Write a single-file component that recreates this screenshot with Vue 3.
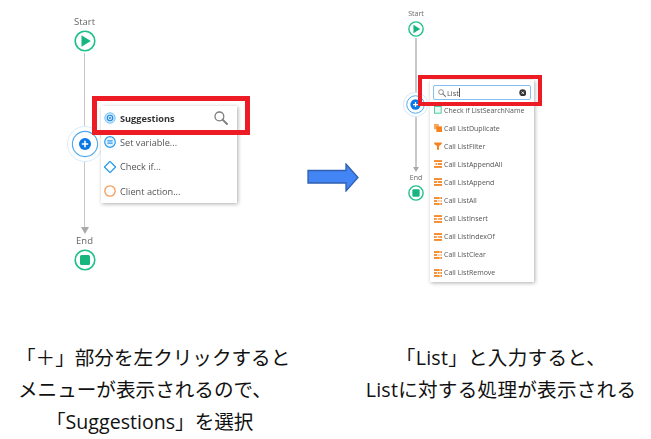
<script setup>
const leftRows = [
  { label: 'Suggestions', icon: 'target', bold: true },
  { label: 'Set variable...', icon: 'assign' },
  { label: 'Check if...', icon: 'diamond' },
  { label: 'Client action...', icon: 'action' },
]
const rightRows = [
  { label: 'Check if ListSearchName', icon: 'check' },
  { label: 'Call ListDuplicate', icon: 'dup' },
  { label: 'Call ListFilter', icon: 'filter' },
  { label: 'Call ListAppendAll', icon: 'appendall' },
  { label: 'Call ListAppend', icon: 'append' },
  { label: 'Call ListAll', icon: 'all' },
  { label: 'Call ListInsert', icon: 'insert' },
  { label: 'Call ListIndexOf', icon: 'insert' },
  { label: 'Call ListClear', icon: 'all' },
  { label: 'Call ListRemove', icon: 'remove' },
]
</script>

<template>
  <div class="page">
    <div class="diagrams">
      <section class="panel panel-left">
        <div class="flow">
          <span class="node-label">Start</span>
          <svg class="terminal" viewBox="0 0 22 22">
            <circle cx="11" cy="11" r="9.8" fill="#fff" stroke="#1fc08a" stroke-width="1.6" />
            <path d="M7.5 5.2 L16.8 11 L7.5 16.8 Z" fill="#17b67e" />
          </svg>
          <i class="line seg-a"></i>
          <svg class="plus" viewBox="0 0 36 36">
            <circle cx="18" cy="18" r="17.5" fill="#fff" stroke="#d9ecfb" stroke-width="1" />
            <circle cx="18" cy="18" r="12.6" fill="#fff" stroke="#4aa8ee" stroke-width="1.1" />
            <circle cx="18" cy="18" r="6" fill="#0a78e6" />
            <path d="M14.8 18h6.4M18 14.8v6.4" stroke="#fff" stroke-width="1.6" />
          </svg>
          <i class="line seg-b"></i>
          <i class="head"></i>
          <span class="node-label label-end">End</span>
          <svg class="terminal" viewBox="0 0 22 22">
            <circle cx="11" cy="11" r="9.8" fill="#fff" stroke="#1fc08a" stroke-width="1.6" />
            <rect x="6" y="6" width="10" height="10" rx="1.5" fill="#17b67e" />
          </svg>
        </div>

        <div class="menu menu-left">
          <div v-for="row in leftRows" :key="row.label" class="row-left">
            <svg class="row-icon" viewBox="0 0 12 12">
              <template v-if="row.icon === 'target'">
                <circle cx="6" cy="6" r="5.2" fill="#cfe8fb" stroke="#6dbcf4" stroke-width=".9" />
                <circle cx="6" cy="6" r="2.7" fill="none" stroke="#1f8be6" stroke-width="1.1" />
                <circle cx="6" cy="6" r="1" fill="#1f8be6" />
              </template>
              <template v-else-if="row.icon === 'assign'">
                <circle cx="6" cy="6" r="5.3" fill="#e4f3fe" stroke="#2f9cf0" stroke-width="1.2" />
                <path d="M3.4 4.8h5.2M3.4 7.2h5.2" stroke="#2f9cf0" stroke-width="1.2" />
              </template>
              <path v-else-if="row.icon === 'diamond'" d="M6 .4 11.6 6 6 11.6 .4 6Z" fill="#fff" stroke="#1f96f0" stroke-width="1.2" />
              <circle v-else cx="6" cy="6" r="5.2" fill="#fff" stroke="#f59a55" stroke-width="1.3" />
            </svg>
            <span :class="['row-text', { strong: row.bold }]">{{ row.label }}</span>
            <svg v-if="row.bold" class="search-large" viewBox="0 0 14 14">
              <circle cx="5.4" cy="5.4" r="4.4" fill="none" stroke="#7d7d7d" stroke-width="1.3" />
              <path d="M8.6 8.6 13 13" stroke="#7d7d7d" stroke-width="1.9" stroke-linecap="round" />
            </svg>
          </div>
        </div>
        <div class="mark mark-left"></div>
      </section>

      <svg class="big-arrow" viewBox="0 0 52 29">
        <path d="M1 7.5H39V1L51 14.5 39 28V20H1Z" fill="#4385f4" stroke="#2f5fb0" stroke-width="1.3" />
      </svg>

      <section class="panel panel-right">
        <div class="flow flow-small">
          <span class="node-label small">Start</span>
          <svg class="terminal-small" viewBox="0 0 22 22">
            <circle cx="11" cy="11" r="9.8" fill="#fff" stroke="#1fc08a" stroke-width="1.9" />
            <path d="M7.5 5.2 L16.8 11 L7.5 16.8 Z" fill="#17b67e" />
          </svg>
          <i class="line seg-c"></i>
          <svg class="plus-small" viewBox="0 0 36 36">
            <circle cx="18" cy="18" r="17.5" fill="#fff" stroke="#cfe6fa" stroke-width="1.2" />
            <circle cx="18" cy="18" r="12.6" fill="#fff" stroke="#4aa8ee" stroke-width="1.4" />
            <circle cx="18" cy="18" r="7.4" fill="#0a78e6" />
            <path d="M14.5 18h7M18 14.5v7" stroke="#fff" stroke-width="1.8" />
          </svg>
          <i class="line seg-d"></i>
          <i class="head head-small"></i>
          <span class="node-label small label-end-small">End</span>
          <svg class="terminal-small" viewBox="0 0 22 22">
            <circle cx="11" cy="11" r="9.8" fill="#fff" stroke="#1fc08a" stroke-width="1.9" />
            <rect x="6" y="6" width="10" height="10" rx="1.5" fill="#17b67e" />
          </svg>
        </div>

        <div class="menu menu-right">
          <div class="search-field">
            <svg class="search-small" viewBox="0 0 14 14">
              <circle cx="5.4" cy="5.4" r="4.2" fill="none" stroke="#777" stroke-width="1.4" />
              <path d="M8.6 8.6 13 13" stroke="#777" stroke-width="1.9" stroke-linecap="round" />
            </svg>
            <span class="search-text">List</span>
            <i class="caret"></i>
            <svg class="clear" viewBox="0 0 10 10">
              <circle cx="5" cy="5" r="4.6" fill="#333" />
              <path d="M3.3 3.3l3.4 3.4M6.7 3.3 3.3 6.7" stroke="#fff" stroke-width="1.1" />
            </svg>
          </div>
          <div v-for="row in rightRows" :key="row.label" class="row-right">
            <svg class="list-icon" viewBox="0 0 10 10">
              <rect v-if="row.icon === 'check'" x=".6" y=".6" width="8.4" height="8.4" fill="#e8f8f2" stroke="#3fc39b" stroke-width="1.1" />
              <g v-else-if="row.icon === 'dup'" fill="#f5821f">
                <rect x="0" y="0" width="6" height="6.5" opacity=".7" />
                <rect x="3" y="3" width="7" height="7" />
              </g>
              <path v-else-if="row.icon === 'filter'" d="M.3.5H9.7V2.6L6.3 5V9.8H3.7V5L.3 2.6Z" fill="#f5821f" />
              <g v-else fill="#f5821f">
                <rect x="0" y=".2" width="10" height="2.2" />
                <rect x="0" y="3.9" width="4" height="2.2" />
                <rect x="5" y="3.9" width="5" height="2.2" :opacity="row.icon === 'all' ? .5 : 1" />
                <rect x="0" y="7.6" width="10" height="2.2" />
                <rect v-if="row.icon === 'appendall'" x="0" y="3.9" width="2" height="2.2" fill="#fff" />
                <rect v-if="row.icon === 'all' || row.icon === 'remove'" x="7" y=".2" width="1" height="9.6" fill="#fff" />
                <rect v-if="row.icon === 'insert'" x="2" y="4.7" width="6" height=".7" fill="#fff" />
              </g>
            </svg>
            <span class="row-label">{{ row.label }}</span>
          </div>
        </div>
        <div class="mark mark-right"></div>
      </section>
    </div>

    <div class="captions">
      <p class="caption caption-left">
        <span>「＋」部分を左クリックすると</span>
        <span class="nudge">メニューが表示されるので、</span>
        <span class="indent">「Suggestions」を選択</span>
      </p>
      <p class="caption caption-right">
        <span>「List」と入力すると、</span>
        <span>Listに対する処理が表示される</span>
      </p>
    </div>
  </div>
</template>

<style scoped>
.page {
  width: 651px;
  height: 439px;
  background: #fff;
  overflow: hidden;
  font-family: "Open Sans", "Noto Sans", sans-serif;
}
.diagrams {
  display: flex;
  height: 342px;
}
.panel {
  position: relative;
  filter: blur(0.3px);
}
.panel-left {
  width: 300px;
}
.panel-right {
  flex: 1;
}
.big-arrow {
  width: 52px;
  height: 29px;
  flex: none;
  margin: 162.5px 7px 0 7px;
}
.flow {
  display: flex;
  flex-direction: column;
  align-items: center;
  width: 40px;
  margin-left: 64.5px;
  padding-top: 16px;
}
.flow-small {
  margin-left: 30px;
  padding-top: 9px;
}
.node-label {
  height: 12px;
  font-size: 9.5px;
  line-height: 12px;
  color: #666;
}
.node-label.small {
  height: 10px;
  font-size: 7px;
  line-height: 10px;
}
.label-end {
  margin-top: 1px;
}
.label-end-small {
  margin-top: 1px;
}
.terminal {
  width: 22px;
  height: 22px;
  margin-top: 2px;
  flex: none;
}
.terminal-small {
  width: 16px;
  height: 16px;
  margin-top: 2px;
  flex: none;
}
.line {
  display: block;
  width: 1.5px;
  background: #c8c8c8;
  flex: none;
}
.seg-a {
  height: 73px;
  margin-top: 1px;
}
.seg-b {
  height: 65px;
}
.seg-c {
  height: 54px;
  margin-top: 1px;
}
.seg-d {
  height: 50px;
}
.plus {
  width: 36px;
  height: 36px;
  flex: none;
  margin-left: 1px;
}
.plus-small {
  width: 25px;
  height: 25px;
  flex: none;
  margin-left: -1px;
}
.head {
  width: 0;
  height: 0;
  flex: none;
  border-left: 4.5px solid transparent;
  border-right: 4.5px solid transparent;
  border-top: 7px solid #a9a9a9;
}
.head-small {
  border-left-width: 3.5px;
  border-right-width: 3.5px;
  border-top-width: 5px;
}
.menu {
  position: absolute;
  background: #fff;
  box-shadow: 1px 1px 4px rgba(0, 0, 0, 0.32);
  box-sizing: border-box;
}
.menu-left {
  left: 101px;
  top: 106px;
  width: 136px;
}
.row-left {
  display: flex;
  align-items: center;
  height: 24.3px;
  padding: 0 9px 0 3px;
}
.row-icon {
  width: 12px;
  height: 12px;
  flex: none;
  margin-right: 4px;
}
.row-text {
  font-size: 9.2px;
  color: #555;
  flex: 1;
}
.row-text.strong {
  font-weight: 700;
  color: #333;
}
.search-large {
  width: 14px;
  height: 14px;
}
.menu-right {
  left: 64px;
  top: 80px;
  width: 104px;
  padding-top: 5px;
}
.search-field {
  display: flex;
  align-items: center;
  box-sizing: border-box;
  height: 15px;
  margin: 0 3px 1px;
  padding: 0 4px 0 4px;
  border: 1px solid #84c1f2;
  border-radius: 2px;
}
.search-small {
  width: 8px;
  height: 8px;
  flex: none;
  margin-right: 1px;
}
.search-text {
  font-size: 7.4px;
  color: #555;
}
.caret {
  display: block;
  width: 1px;
  height: 9px;
  background: #555;
  flex: none;
}
.clear {
  width: 7.5px;
  height: 7.5px;
  margin-left: auto;
}
.row-right {
  display: flex;
  align-items: center;
  height: 18.1px;
  padding-left: 4px;
}
.list-icon {
  width: 8px;
  height: 8px;
  flex: none;
  margin-right: 2px;
}
.row-label {
  font-size: 7px;
  color: #555;
}
.mark {
  position: absolute;
  box-sizing: border-box;
  border-style: solid;
  border-color: #ed1c24;
}
.mark-left {
  left: 92px;
  top: 96px;
  width: 158px;
  height: 39px;
  border-width: 5px;
}
.mark-right {
  left: 52px;
  top: 75px;
  width: 124px;
  height: 31px;
  border-width: 4.5px;
}
.captions {
  display: flex;
}
.caption {
  display: flex;
  flex-direction: column;
  margin: 0;
  font-family: "Open Sans", "Noto Sans CJK JP", sans-serif;
  font-size: 19.6px;
  line-height: 32px;
  color: #111;
  white-space: pre;
}
.caption-left {
  width: 351px;
  padding-left: 16px;
  box-sizing: border-box;
}
.nudge {
  padding-left: 2px;
}
.indent {
  padding-left: 30px;
}
.caption-right {
  width: 300px;
  align-items: center;
  letter-spacing: 0.25px;
}
</style>
